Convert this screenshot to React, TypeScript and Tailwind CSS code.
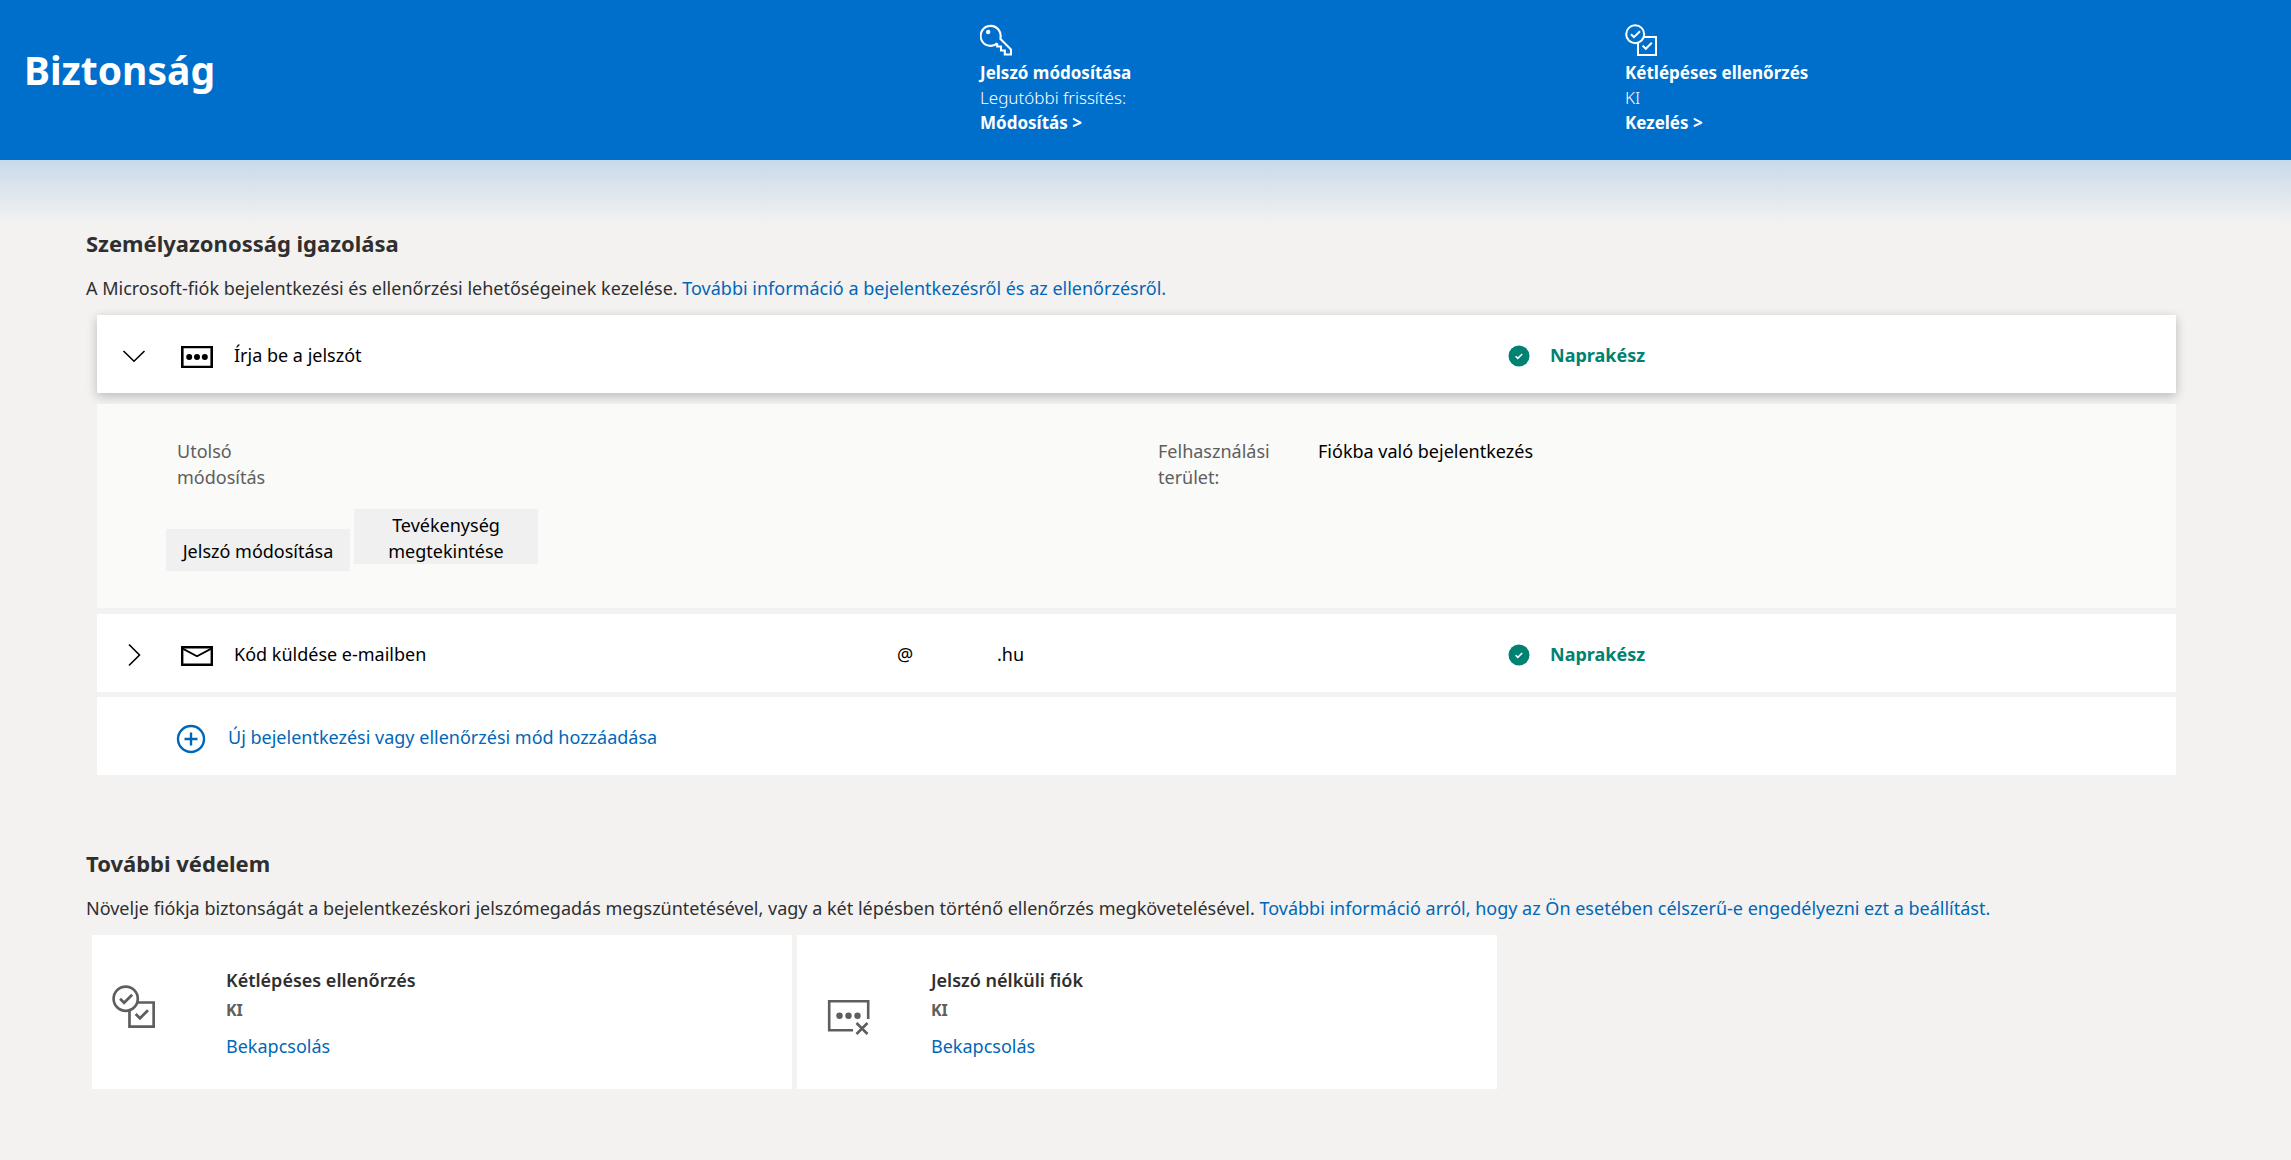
import type { ReactNode } from 'react'

function KeyIcon() {
  return (
    <svg width="32" height="32" viewBox="0 0 32 32" fill="none" stroke="currentColor" strokeWidth="2.1">
      <path d="M20 14.5 31 25.5V30.5H24.8V26.5H21V22.5H17.2V19.2" strokeLinejoin="miter" />
      <path d="M20.2 14.8A10 10 0 1 0 17.2 19.4" />
      <circle cx="8.2" cy="8" r="2.2" fill="currentColor" stroke="none" />
    </svg>
  )
}

function TwoStepIcon({ className }: { className: string }) {
  return (
    <svg className={className} viewBox="0 0 32 32" fill="none" stroke="currentColor" strokeWidth="2">
      <circle cx="10.2" cy="10.2" r="9" />
      <path d="M19 13H31V31H13V19" />
      <path d="m6 10.2 3 3 6-6" />
      <path d="m17.6 21.6 3.2 3.2 6-6" />
    </svg>
  )
}

function PasswordIcon() {
  return (
    <svg width="32" height="22" viewBox="0 0 32 22" fill="currentColor">
      <path d="M0 0H32V22H0ZM2.6 2.2V19.8H29.4V2.2Z" fillRule="evenodd" />
      <circle cx="8.2" cy="11" r="3" />
      <circle cx="16" cy="11" r="3" />
      <circle cx="23.8" cy="11" r="3" />
    </svg>
  )
}

function MailIcon() {
  return (
    <svg width="32" height="20" viewBox="0 0 32 20" fill="none" stroke="currentColor" strokeWidth="2.4">
      <path d="M1.2 1.2H30.8V18.8H1.2Z" />
      <path d="M1.2 2.4 16 10.2 30.8 2.4" strokeWidth="1.8" />
    </svg>
  )
}

function PasswordlessIcon() {
  return (
    <svg width="44" height="38" viewBox="0 0 44 38" fill="none" stroke="currentColor" strokeWidth="2.6">
      <path d="M26 31.2H2.2V2.2H41.2V20" />
      <path d="m29.5 24 11 11M40.5 24l-11 11" />
      <g fill="currentColor" stroke="none">
        <circle cx="12.5" cy="16.8" r="3.2" />
        <circle cx="21.5" cy="16.8" r="3.2" />
        <circle cx="30.5" cy="16.8" r="3.2" />
      </g>
    </svg>
  )
}

function PlusIcon() {
  return (
    <svg width="30" height="30" viewBox="0 0 30 30" fill="none" stroke="currentColor" strokeWidth="2.4">
      <circle cx="15" cy="15" r="13" />
      <path d="M15 8.5V21.5M8.5 15H21.5" />
    </svg>
  )
}

function Chevron({ open }: { open: boolean }) {
  return (
    <svg width="24" height="24" viewBox="0 0 24 24" fill="none" stroke="currentColor" strokeWidth="1.6">
      <path d={open ? 'M1.5 7 12 17.2 22.5 7' : 'M7 1.5 17.5 12 7 22.5'} />
    </svg>
  )
}

function HeaderAction({ icon, title, status, action }: { icon: ReactNode; title: string; status: string; action: string }) {
  return (
    <div className="pt-6 text-[17px] leading-[25px] text-white">
      <div className="h-9">{icon}</div>
      <h2 className="font-bold">{title}</h2>
      <p className="font-light">{status}</p>
      <a href="#" className="font-bold">{action} &gt;</a>
    </div>
  )
}

function UpToDate() {
  return (
    <div className="flex items-center gap-5">
      <svg width="22" height="22" viewBox="0 0 22 22" className="mt-0.5">
        <circle cx="11" cy="11" r="10.5" fill="#008272" />
        <path d="m7.6 11.2 2.2 2.2 4.4-4.4" fill="none" stroke="#fff" strokeWidth="1.6" />
      </svg>
      <span className="font-bold text-[#008272]">Naprakész</span>
    </div>
  )
}

function MethodRow({ open, icon, label, children }: { open: boolean; icon: ReactNode; label: string; children?: ReactNode }) {
  return (
    <div
      className={`grid h-[78px] grid-cols-[800fr_611fr_668fr] items-center bg-white pt-0.5 text-black ${
        open ? 'shadow-[0_3px_10px_rgba(0,0,0,0.24)]' : ''
      }`}
    >
      <button type="button" aria-expanded={open} className="flex items-center pl-[25px] text-left">
        <span className="pt-0.5"><Chevron open={open} /></span>
        <span className="ml-[35px] flex w-[53px] shrink-0 items-center pt-1">{icon}</span>
        {label}
      </button>
      <div>{children}</div>
      <UpToDate />
    </div>
  )
}

function ProtectionCard({ icon, title }: { icon: ReactNode; title: string }) {
  return (
    <div className="flex h-[154px] items-center bg-white pl-5">
      <div className="flex w-[114px] shrink-0 text-[#605e5c]">{icon}</div>
      <div className="pt-1">
        <h3 className="leading-8 font-semibold">{title}</h3>
        <p className="text-[16px] leading-7 font-bold text-[#605e5c]">KI</p>
        <a href="#" className="block pt-1 leading-9 text-[#0067b8]">Bekapcsolás</a>
      </div>
    </div>
  )
}

export default function App() {
  return (
    <div className="min-h-screen bg-[#f3f2f1] font-['Noto_Sans','Open_Sans',sans-serif] text-[18px] leading-[26px] text-[#2f2f2f]">
      <header className="grid h-40 grid-cols-[980fr_645fr_666fr] bg-[#006fcb]">
        <h1 className="pt-10 pl-6 text-[39px] leading-[60px] font-bold text-white">Biztonság</h1>
        <HeaderAction icon={<KeyIcon />} title="Jelszó módosítása" status="Legutóbbi frissítés:" action="Módosítás" />
        <HeaderAction icon={<TwoStepIcon className="size-8" />} title="Kétlépéses ellenőrzés" status="KI" action="Kezelés" />
      </header>

      <main className="bg-[linear-gradient(#c8daea,#f3f2f1_64px)] px-[86px] pt-[67px] pb-[71px]">
        <section>
          <h2 className="text-[22px] leading-8 font-bold">Személyazonosság igazolása</h2>
          <p className="pt-4">
            A Microsoft-fiók bejelentkezési és ellenőrzési lehetőségeinek kezelése.{' '}
            <a href="#" className="text-[#0067b8]">További információ a bejelentkezésről és az ellenőrzésről.</a>
          </p>

          <div className="mt-[14px] mr-[29px] ml-[11px]">
            <MethodRow open icon={<PasswordIcon />} label="Írja be a jelszót" />

            <div className="relative mt-[11px] bg-[#fafaf9] pt-[34px] pb-[37px]">
              <dl className="grid grid-cols-[981fr_1018fr] pl-20">
                <div className="flex">
                  <dt className="w-[160px] pr-8 text-[#605e5c]">Utolsó módosítás</dt>
                  <dd />
                </div>
                <div className="flex">
                  <dt className="w-[160px] pr-8 text-[#605e5c]">Felhasználási terület:</dt>
                  <dd className="text-black">Fiókba való bejelentkezés</dd>
                </div>
              </dl>
              <div className="mt-[19px] flex items-end gap-1 pl-[69px] text-black">
                <button type="button" className="w-[184px] bg-[#f0f0f0] pt-[9px] pb-[7px] whitespace-nowrap">Jelszó módosítása</button>
                <button type="button" className="mb-[7px] w-[184px] bg-[#f0f0f0] px-6 pt-[3px]">Tevékenység megtekintése</button>
              </div>
            </div>

            <div className="mt-[6px]">
              <MethodRow open={false} icon={<MailIcon />} label="Kód küldése e-mailben">
                <span className="inline-block w-[100px]">@</span>
                <span>.hu</span>
              </MethodRow>
            </div>

            <div className="mt-[5px] flex h-[78px] items-center bg-white pl-[79px]">
              <a href="#" className="flex items-center gap-[22px] pt-0.5 text-[#0067b8]">
                <span className="pt-1"><PlusIcon /></span>
                Új bejelentkezési vagy ellenőrzési mód hozzáadása
              </a>
            </div>
          </div>
        </section>

        <section className="pt-[72px]">
          <h2 className="text-[22px] leading-8 font-bold">További védelem</h2>
          <p className="pt-4">
            Növelje fiókja biztonságát a bejelentkezéskori jelszómegadás megszüntetésével, vagy a két lépésben történő ellenőrzés megkövetelésével.{' '}
            <a href="#" className="text-[#0067b8]">További információ arról, hogy az Ön esetében célszerű-e engedélyezni ezt a beállítást.</a>
          </p>
          <div className="mt-[14px] ml-1.5 grid max-w-[1405px] grid-cols-2 gap-[5px]">
            <ProtectionCard icon={<span className="pb-3"><TwoStepIcon className="size-[43px]" /></span>} title="Kétlépéses ellenőrzés" />
            <ProtectionCard icon={<span className="pt-3 pl-2.5"><PasswordlessIcon /></span>} title="Jelszó nélküli fiók" />
          </div>
        </section>
      </main>
    </div>
  )
}
